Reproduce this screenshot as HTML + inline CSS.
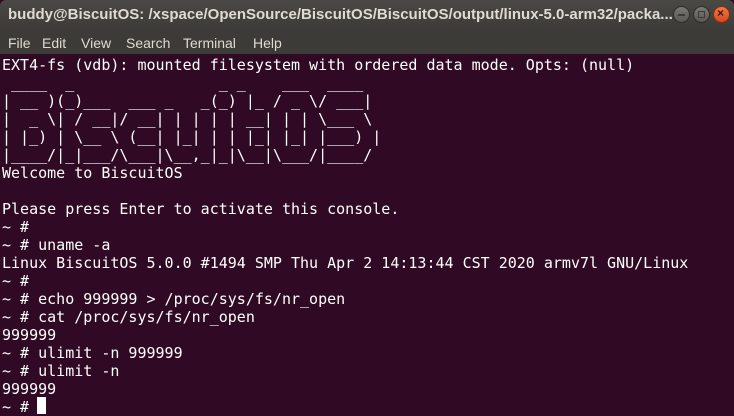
<!DOCTYPE html>
<html><head><style>
html,body{margin:0;padding:0;width:734px;height:416px;overflow:hidden;background:#300a24}
#title{position:absolute;left:0;top:0;width:734px;height:30px;background:linear-gradient(#4a4945,#3c3b37);border-radius:6px 6px 0 0;}
#title span{position:absolute;left:8px;top:6px;font:bold 15px "Liberation Sans",sans-serif;color:#dfdbd2;white-space:nowrap}
#menu{position:absolute;left:0;top:30px;width:734px;height:24px;background:#3c3b37;font:14px "Liberation Sans",sans-serif;color:#dfdbd2;}
#menu span{position:absolute;top:5px}
.btn{position:absolute;top:6px;width:17px;height:17px;border-radius:50%;background:linear-gradient(#7a7873,#5a5955);border:1px solid #2e2d2a;box-sizing:border-box}
#term{position:absolute;left:2px;top:56px;margin:0;font:15px/18px "DejaVu Sans Mono",monospace;color:#ffffff;white-space:pre}
#cur{position:absolute;left:37px;top:397px;width:9px;height:17px;background:#fff}
</style></head><body>
<div id="title"><span>buddy@BiscuitOS: /xspace/OpenSource/BiscuitOS/BiscuitOS/output/linux-5.0-arm32/packa...</span>
<div class="btn" style="left:673px"><div style="position:absolute;left:4px;top:7px;width:7px;height:1.5px;background:#3c3b37"></div></div>
<div class="btn" style="left:693px"><div style="position:absolute;left:4px;top:4px;width:5px;height:5px;border:1px solid #3c3b37"></div></div>
<div class="btn" style="left:713px;background:linear-gradient(#f0784a,#d8481d);border-color:#8a2e10"><span style="left:3px;top:-1px;font:bold 12px 'Liberation Sans',sans-serif;color:#3c1a0c">×</span></div>
</div>
<div id="menu"><span style="left:8px">File</span><span style="left:42px">Edit</span><span style="left:81px">View</span><span style="left:126px">Search</span><span style="left:183px">Terminal</span><span style="left:253px">Help</span></div>
<pre id="term">EXT4-fs (vdb): mounted filesystem with ordered data mode. Opts: (null)
 ____  _                _ _    ___  ____  
| __ )(_)___  ___ _   _(_) |_ / _ \/ ___| 
|  _ \| / __|/ __| | | | | __| | | \___ \ 
| |_) | \__ \ (__| |_| | | |_| |_| |___) |
|____/|_|___/\___|\__,_|_|\__|\___/|____/ 
Welcome to BiscuitOS

Please press Enter to activate this console.
~ #
~ # uname -a
Linux BiscuitOS 5.0.0 #1494 SMP Thu Apr 2 14:13:44 CST 2020 armv7l GNU/Linux
~ #
~ # echo 999999 &gt; /proc/sys/fs/nr_open
~ # cat /proc/sys/fs/nr_open
999999
~ # ulimit -n 999999
~ # ulimit -n
999999
~ # </pre>
<div id="cur"></div>
</body></html>
